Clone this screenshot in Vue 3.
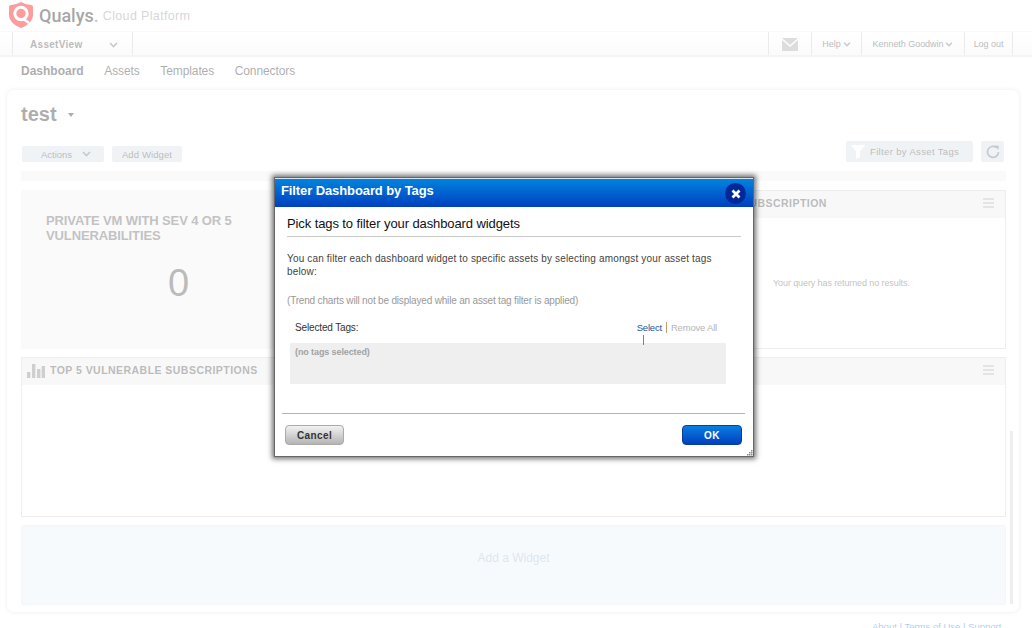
<script setup>
const tabs = ['Dashboard', 'Assets', 'Templates', 'Connectors']
</script>

<template>
  <div class="page">
    <header class="brand">
      <svg class="logo" width="24" height="26" viewBox="0 0 24 26">
        <path d="M12 0C15 1.6 18 2.6 22 3Q24 3.2 24 5V13C24 19 18 24 12 26C6 24 0 19 0 13V5Q0 3.2 2 3C6 2.6 9 1.6 12 0Z" fill="#f80808" />
        <circle cx="12" cy="11.5" r="6.2" fill="none" stroke="#fff" stroke-width="3" />
        <path d="M14.5 17L20 21" fill="none" stroke="#fff" stroke-width="2.6" />
      </svg>
      <span class="brand-name">Qualys<i>.</i></span>
      <span class="brand-sub">Cloud Platform</span>
    </header>

    <div class="modulebar">
      <div class="module">
        <span>AssetView</span>
        <svg class="chev" width="9" height="6" viewBox="0 0 9 6"><path d="M1 1L4.5 4.5L8 1" fill="none" stroke="#777" stroke-width="1.6" /></svg>
      </div>
      <div class="userbar">
        <div class="ub-item ub-mail">
          <svg width="16" height="13" viewBox="0 0 16 13">
            <path d="M0 0H16L8 7Z" fill="#aaa" />
            <path d="M0 2L8 9L16 2V13H0Z" fill="#aaa" />
          </svg>
        </div>
        <div class="ub-item ub-help">Help
          <svg width="8" height="5" viewBox="0 0 9 6"><path d="M1 1L4.5 4.5L8 1" fill="none" stroke="#777" stroke-width="1.6" /></svg>
        </div>
        <div class="ub-item ub-user">Kenneth Goodwin
          <svg width="8" height="5" viewBox="0 0 9 6"><path d="M1 1L4.5 4.5L8 1" fill="none" stroke="#777" stroke-width="1.6" /></svg>
        </div>
        <div class="ub-item ub-out">Log out</div>
      </div>
    </div>

    <nav class="tabs">
      <a v-for="(t, i) in tabs" :key="t" :class="{ on: i === 0 }">{{ t }}</a>
    </nav>

    <main class="card">
      <div class="title-row">
        <h1>test</h1>
        <span class="caret"></span>
      </div>

      <div class="toolbar">
        <div class="tb-left">
          <button class="tb-btn actions">Actions
            <svg width="9" height="6" viewBox="0 0 9 6"><path d="M1 1L4.5 4.5L8 1" fill="none" stroke="#777" stroke-width="1.6" /></svg>
          </button>
          <button class="tb-btn add">Add Widget</button>
        </div>
        <div class="tb-right">
          <button class="tb-btn filter">
            <svg width="14" height="14" viewBox="0 0 14 14"><path d="M0 0H14L9 6.5V12L5 14V6.5Z" fill="#fff" /></svg>
            Filter by Asset Tags
          </button>
          <button class="tb-btn refresh">
            <svg width="14" height="14" viewBox="0 0 14 14"><path d="M10.5 2.6A5.5 5.5 0 1 0 12.5 7" fill="none" stroke="#778" stroke-width="1.7" /><path d="M8.5 0.5L13 0.8L12.2 5Z" fill="#778" /></svg>
          </button>
        </div>
      </div>

      <div class="strip"></div>

      <div class="row-one">
        <section class="stat">
          <h2>PRIVATE VM WITH SEV 4 OR 5 VULNERABILITIES</h2>
          <div class="stat-num">0</div>
        </section>
        <section class="widget small">
          <div class="w-head">
            <span class="w-title right-title">SUBSCRIPTION</span>
            <span class="burger"><i></i><i></i><i></i></span>
          </div>
          <div class="w-empty">Your query has returned no results.</div>
        </section>
      </div>

      <section class="widget tall">
        <div class="w-head">
          <svg class="bars" width="18" height="14" viewBox="0 0 18 14">
            <rect x="0" y="8" width="3.4" height="6" fill="#888" />
            <rect x="5" y="0" width="3.4" height="14" fill="#888" />
            <rect x="10" y="5" width="3.4" height="9" fill="#888" />
            <rect x="14.6" y="2" width="3.4" height="12" fill="#888" />
          </svg>
          <span class="w-title">TOP 5 VULNERABLE SUBSCRIPTIONS</span>
          <span class="burger"><i></i><i></i><i></i></span>
        </div>
      </section>

      <div class="add-widget">Add a Widget</div>
      <div class="scroll-thumb"></div>
    </main>

    <footer class="foot">About | Terms of Use | Support</footer>

    <div class="overlay"></div>

    <div class="dialog">
      <div class="d-head">
        <span class="d-title">Filter Dashboard by Tags</span>
        <button class="d-close">
          <svg width="10" height="10" viewBox="0 0 10 10"><path d="M1.5 1.5L8.5 8.5M8.5 1.5L1.5 8.5" fill="none" stroke="#fff" stroke-width="2.8" /></svg>
        </button>
      </div>
      <div class="d-body">
        <h3>Pick tags to filter your dashboard widgets</h3>
        <p class="d-text">You can filter each dashboard widget to specific assets by selecting amongst your asset tags below:</p>
        <p class="d-note">(Trend charts will not be displayed while an asset tag filter is applied)</p>
        <div class="tags-head">
          <span>Selected Tags:</span>
          <span class="tag-links"><a class="sel">Select</a><i class="pipe"></i><a class="rem">Remove All</a></span>
          <i class="tick"></i>
        </div>
        <div class="tags-box">(no tags selected)</div>
      </div>
      <div class="d-foot">
        <button class="btn-cancel">Cancel</button>
        <button class="btn-ok">OK</button>
      </div>
      <svg class="grip" width="6" height="6" viewBox="0 0 6 6">
        <rect x="4" y="0" width="1.5" height="1.5" fill="#888" />
        <rect x="2" y="2" width="1.5" height="1.5" fill="#888" />
        <rect x="4" y="2" width="1.5" height="1.5" fill="#888" />
        <rect x="0" y="4" width="1.5" height="1.5" fill="#888" />
        <rect x="2" y="4" width="1.5" height="1.5" fill="#888" />
        <rect x="4" y="4" width="1.5" height="1.5" fill="#888" />
      </svg>
    </div>
  </div>
</template>

<style scoped>
.page {
  position: relative;
  width: 1032px;
  height: 628px;
  overflow: hidden;
  background: #fff;
  font-family: "Liberation Sans", Arial, sans-serif;
  color: #333;
}

/* top */
.brand {
  height: 32px;
  display: flex;
  align-items: center;
  padding-left: 9px;
  box-sizing: border-box;
  border-bottom: 1px solid #eee;
}
.logo {
  margin-right: 6px;
  margin-top: -1px;
}
.brand-name {
  font-family: Roboto, sans-serif;
  font-size: 18px;
  font-weight: 500;
  color: #222;
}
.brand-name i {
  font-style: normal;
  color: #777;
}
.brand-sub {
  font-size: 12.5px;
  color: #999;
  margin-left: 4px;
  letter-spacing: 0.35px;
  padding-top: 1px;
}
.modulebar {
  height: 23px;
  display: flex;
  justify-content: space-between;
  padding-left: 12px;
  background: linear-gradient(#fff, #f4f4f4);
  border-bottom: 2px solid #e3e3e3;
}
.module {
  width: 121px;
  display: flex;
  align-items: center;
  box-sizing: border-box;
  padding: 2px 0 0 17px;
  border-left: 1px solid #ccc;
  border-right: 1px solid #ccc;
  font-size: 10px;
  font-weight: bold;
  color: #555;
  letter-spacing: 0.3px;
}
.chev {
  margin-left: 26px;
}
.userbar {
  display: flex;
  padding-right: 19px;
  font-size: 9px;
  letter-spacing: -0.05px;
  color: #555;
}
.ub-item {
  display: flex;
  align-items: center;
  justify-content: center;
  gap: 2px;
  padding-top: 1px;
  border-left: 1px solid #ccc;
  box-sizing: border-box;
}
.ub-mail { width: 43px; }
.ub-help { width: 50px; }
.ub-user { width: 103px; }
.ub-out { width: 49px; border-right: 1px solid #ccc; }
.tabs {
  display: flex;
  gap: 20.6px;
  padding: 7px 0 0 21px;
  height: 25px;
  box-sizing: border-box;
  font-size: 12px;
  line-height: 14px;
  letter-spacing: -0.1px;
  color: #333;
}
.tabs .on {
  font-weight: bold;
  letter-spacing: 0;
}

/* card */
.card {
  position: relative;
  margin: 8px 0 0 7px;
  width: 1012px;
  height: 522px;
  box-sizing: border-box;
  padding: 0 13px 0 14px;
  background: #fff;
  border-radius: 7px;
  box-shadow: 0 0 5px rgba(0, 0, 0, 0.18);
}
.title-row {
  display: flex;
  align-items: center;
  height: 50px;
  padding-bottom: 2px;
  box-sizing: border-box;
}
h1 {
  margin: 0;
  font-size: 20px;
  font-weight: bold;
  color: #333;
}
.caret {
  width: 0;
  height: 0;
  margin: 2px 0 0 11px;
  border-left: 3px solid transparent;
  border-right: 3px solid transparent;
  border-top: 4px solid #333;
}
.toolbar {
  display: flex;
  justify-content: space-between;
  padding: 1px 2px 0 1px;
  height: 31px;
  box-sizing: border-box;
}
.tb-left {
  display: flex;
  gap: 8px;
  padding-top: 5px;
  height: 16px;
}
.tb-right {
  display: flex;
  gap: 8px;
  height: 21px;
}
.tb-btn {
  display: flex;
  align-items: center;
  justify-content: center;
  height: 100%;
  padding: 0;
  border: none;
  border-radius: 2px;
  background: #d9e1e8;
  font-family: inherit;
  font-size: 9.5px;
  color: #555;
}
.actions {
  width: 82px;
  gap: 10px;
  padding-left: 6px;
  box-sizing: border-box;
}
.add {
  width: 70px;
  letter-spacing: 0.1px;
}
.filter {
  width: 127px;
  padding: 0 0 0 5px;
  justify-content: flex-start;
  gap: 5px;
  letter-spacing: 0.35px;
}
.refresh {
  width: 23px;
}
.strip {
  height: 10px;
  background: #f2f2f2;
}
.row-one {
  display: grid;
  grid-template-columns: 490px 1fr;
  gap: 8px;
  margin-top: 9px;
  height: 159px;
}
.stat {
  background: #f2f2f2;
  padding: 23px 25px 0;
}
.stat h2 {
  margin: 0;
  font-size: 13px;
  line-height: 15px;
  font-weight: bold;
  color: #666;
  letter-spacing: -0.12px;
  width: 220px;
}
.stat-num {
  width: 265px;
  text-align: center;
  font-size: 38px;
  line-height: 44px;
  margin-top: 18px;
  color: #555;
}
.widget {
  border: 1px solid #d4d4d4;
  box-sizing: border-box;
  background: #fff;
}
.w-head {
  display: flex;
  align-items: center;
  height: 27px;
  box-sizing: border-box;
  padding: 0 11px 4px 5px;
  background: #eee;
}
.w-title {
  font-size: 10.5px;
  font-weight: bold;
  color: #555;
  letter-spacing: 0.46px;
}
.right-title {
  margin-left: 217px;
}
.bars {
  margin: 3px 5px 0 0;
}
.burger {
  margin-left: auto;
  display: flex;
  flex-direction: column;
  gap: 2px;
}
.burger i {
  display: block;
  width: 11px;
  height: 2px;
  background: #bbb;
}
.w-empty {
  margin-left: 253px;
  margin-top: 60px;
  font-size: 9px;
  letter-spacing: -0.1px;
  color: #666;
}
.tall {
  margin-top: 8px;
  height: 160px;
}
.add-widget {
  margin-top: 8px;
  height: 80px;
  display: flex;
  align-items: center;
  justify-content: center;
  padding-bottom: 14px;
  border: 1px solid #e2ecf6;
  border-radius: 2px;
  background: #ecf3fb;
  box-sizing: border-box;
  font-size: 12px;
  color: #a9c0d8;
}
.scroll-thumb {
  position: absolute;
  right: 6px;
  top: 341px;
  width: 3px;
  height: 173px;
  background: #d4d4d4;
}
.foot {
  margin: 9px 0 0 872px;
  font-size: 9.5px;
  color: #3d7fd0;
  white-space: nowrap;
}

.overlay {
  position: absolute;
  inset: 0;
  background: rgba(255, 255, 255, 0.6);
}

/* dialog */
.dialog {
  position: absolute;
  left: 274px;
  top: 177px;
  width: 480px;
  height: 280px;
  box-sizing: border-box;
  border: 1px solid #666;
  background: #fff;
  box-shadow: 0 0 5px 2px rgba(0, 0, 0, 0.55);
}
.d-head {
  display: flex;
  align-items: center;
  justify-content: space-between;
  height: 29px;
  padding: 0 7px 0 6px;
  border-top: 1px solid #d8e6f4;
  box-sizing: border-box;
  background: linear-gradient(#0084de, #003fc0);
  font-size: 13px;
  font-weight: bold;
  color: #fff;
}
.d-title {
  margin-top: -5px;
  letter-spacing: -0.1px;
}
.d-close {
  display: flex;
  align-items: center;
  justify-content: center;
  width: 21px;
  height: 21px;
  padding: 0;
  margin-top: 1px;
  border: none;
  border-radius: 50%;
  background: #00289a;
}
.d-body {
  padding: 9px 4px 0 5px;
  height: 207px;
  box-sizing: border-box;
  border-bottom: 1px solid #b5b5b5;
  margin: 0 8px 0 7px;
}
h3 {
  margin: 0;
  padding-bottom: 4px;
  font-size: 13px;
  line-height: 16px;
  font-weight: normal;
  color: #111;
  letter-spacing: -0.1px;
  border-bottom: 1px solid #c8c8c8;
}
.d-text {
  margin: 15px 0 0;
  font-size: 10px;
  line-height: 13px;
  letter-spacing: 0.16px;
  color: #444;
  width: 440px;
}
.d-note {
  margin: 16px 0 0;
  font-size: 10px;
  line-height: 13px;
  letter-spacing: -0.18px;
  color: #999;
}
.tags-head {
  position: relative;
  display: flex;
  justify-content: space-between;
  margin: 14px 24px 0 8px;
  font-size: 10px;
  line-height: 13px;
  letter-spacing: -0.15px;
  color: #333;
}
.tag-links {
  display: flex;
  align-items: center;
  font-size: 9.5px;
  letter-spacing: -0.2px;
}
.sel {
  color: #17569a;
}
.pipe {
  width: 1px;
  height: 11px;
  margin: 0 4px;
  background: #c89a70;
}
.rem {
  color: #b5b5b5;
}
.tick {
  position: absolute;
  left: 348px;
  top: 14px;
  width: 1px;
  height: 10px;
  background: #a87c3c;
}
.tags-box {
  margin: 9px 15px 0 3px;
  height: 41px;
  box-sizing: border-box;
  padding: 3px 5px;
  background: #efefef;
  font-size: 9px;
  line-height: 12px;
  font-weight: bold;
  letter-spacing: -0.1px;
  color: #a2a2a2;
}
.d-foot {
  display: flex;
  justify-content: space-between;
  padding: 11px 11px 0 10px;
}
.btn-cancel,
.btn-ok {
  height: 20px;
  padding: 0;
  border-radius: 4px;
  font-family: inherit;
  font-size: 10px;
  font-weight: bold;
  letter-spacing: 0.4px;
}
.btn-cancel {
  width: 59px;
  border: 1px solid #aaa;
  background: linear-gradient(#f2f2f2, #b4b4b4);
  color: #333;
}
.btn-ok {
  width: 60px;
  border: 1px solid #0a3f96;
  background: linear-gradient(#0a7ee0, #0040c0);
  color: #fff;
}
.grip {
  position: absolute;
  right: 0;
  bottom: 0;
}
</style>

<style>
html, body {
  margin: 0;
  overflow: hidden;
}
</style>
